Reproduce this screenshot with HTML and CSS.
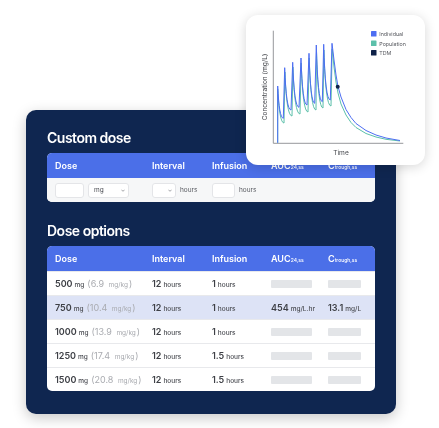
FILE: index.html
```html
<!DOCTYPE html>
<html lang="en">
<head>
<meta charset="utf-8">
<title>Dose options</title>
<link rel="stylesheet" href="styles.css">
</head>
<body>
<div class="stage">
  <div class="panel">
    <h2 class="title">Custom dose</h2>
    <div class="table">
      <div class="row head">
        <div class="cell">Dose</div>
        <div class="cell">Interval</div>
        <div class="cell">Infusion</div>
        <div class="cell">AUC<sub>24,ss</sub></div>
        <div class="cell">C<sub>trough,ss</sub></div>
      </div>
      <div class="row inputs">
        <div class="cell">
          <span class="input w-dose"></span>
          <span class="select w-unit">mg<svg class="chev" viewBox="0 0 5 3"><path d="M0.5 0.5 L2.5 2.5 L4.5 0.5"/></svg></span>
        </div>
        <div class="cell">
          <span class="select w-int"><svg class="chev" viewBox="0 0 5 3"><path d="M0.5 0.5 L2.5 2.5 L4.5 0.5"/></svg></span>
          <span class="unit">hours</span>
        </div>
        <div class="cell">
          <span class="input w-inf"></span>
          <span class="unit">hours</span>
        </div>
        <div class="cell"></div>
        <div class="cell"></div>
      </div>
    </div>

    <h2 class="title second">Dose options</h2>
    <div class="table">
      <div class="row head">
        <div class="cell">Dose</div>
        <div class="cell">Interval</div>
        <div class="cell">Infusion</div>
        <div class="cell">AUC<sub>24,ss</sub></div>
        <div class="cell">C<sub>trough,ss</sub></div>
      </div>
      <div class="row">
        <div class="cell"><b>500</b> <small>mg</small> <span class="muted">(6.9 <small>mg/kg</small>)</span></div>
        <div class="cell"><b>12</b> <small>hours</small></div>
        <div class="cell"><b>1</b> <small>hours</small></div>
        <div class="cell"><span class="ph ph-auc"></span></div>
        <div class="cell"><span class="ph ph-c"></span></div>
      </div>
      <div class="row selected">
        <div class="cell"><b>750</b> <small>mg</small> <span class="muted">(10.4 <small>mg/kg</small>)</span></div>
        <div class="cell"><b>12</b> <small>hours</small></div>
        <div class="cell"><b>1</b> <small>hours</small></div>
        <div class="cell"><b>454</b> <small>mg/L.hr</small></div>
        <div class="cell"><b>13.1</b> <small>mg/L</small></div>
      </div>
      <div class="row">
        <div class="cell"><b>1000</b> <small>mg</small> <span class="muted">(13.9 <small>mg/kg</small>)</span></div>
        <div class="cell"><b>12</b> <small>hours</small></div>
        <div class="cell"><b>1</b> <small>hours</small></div>
        <div class="cell"><span class="ph ph-auc"></span></div>
        <div class="cell"><span class="ph ph-c"></span></div>
      </div>
      <div class="row">
        <div class="cell"><b>1250</b> <small>mg</small> <span class="muted">(17.4 <small>mg/kg</small>)</span></div>
        <div class="cell"><b>12</b> <small>hours</small></div>
        <div class="cell"><b>1.5</b> <small>hours</small></div>
        <div class="cell"><span class="ph ph-auc"></span></div>
        <div class="cell"><span class="ph ph-c"></span></div>
      </div>
      <div class="row">
        <div class="cell"><b>1500</b> <small>mg</small> <span class="muted">(20.8 <small>mg/kg</small>)</span></div>
        <div class="cell"><b>12</b> <small>hours</small></div>
        <div class="cell"><b>1.5</b> <small>hours</small></div>
        <div class="cell"><span class="ph ph-auc"></span></div>
        <div class="cell"><span class="ph ph-c"></span></div>
      </div>
    </div>
  </div>

  <div class="chart-card">
    <svg class="chart" viewBox="0 0 179 150" width="179" height="150">
      <line class="axis" x1="27.3" y1="15.7" x2="27.3" y2="128.3"/>
      <line class="axis" x1="27.3" y1="128.3" x2="157.3" y2="128.3"/>
      <path class="pop" d="M31.7,127.8 L31.7,74 Q33.4,108 38,108 L38.9,57 Q40.5,101 46,101 L46.9,52 Q48.5,99 54,99 L55.2,48 Q56.8,97 62,97 L63.2,43 Q64.8,95 70,95 L70.5,36 Q72,93 77,93 L77.9,35 Q79.5,91 85,91 L86.2,34 L88,52 L90,67 L92,78 L95,89 L100,100 L105,107.5 L110,112.5 L120,118.5 L130,122 L140,124.3 L154,126"/>
      <path class="ind" d="M31.7,127.8 L31.7,71 Q33.2,103 37.3,103.3 L38.7,52.7 Q40.2,95 45,95 L46.7,47.3 Q48.2,92.3 53,92.3 L55,43 Q56.5,90 61,90 L63,38.3 Q64.5,88.3 68.7,88.3 L70.3,30 Q71.8,86.7 76.3,86.7 L77.7,29.3 Q79.2,85 84.3,85 L86,28.3 L88,45 L90,60 L92,71.5 L95,82 L100,94.5 L105,102.5 L110,108.5 L120,115.5 L130,120 L140,123 L154,125.5"/>
      <circle class="tdm" cx="91.7" cy="71.7" r="2"/>
      <rect x="125" y="16" width="5.5" height="5.5" rx="0.6" fill="#4d6ef2"/>
      <rect x="125" y="25.5" width="5.5" height="5.5" rx="0.6" fill="#5cc0aa"/>
      <rect x="125" y="35" width="5.5" height="5.5" rx="0.6" fill="#0e2148"/>
      <text class="legend" x="133.3" y="21">Individual</text>
      <text class="legend" x="133.3" y="30.5">Population</text>
      <text class="legend" x="133.3" y="40">TDM</text>
      <text class="axis-label" x="95" y="140.3" text-anchor="middle">Time</text>
      <text class="axis-label" text-anchor="middle" transform="translate(20.5,72) rotate(-90)">Concentration (mg/L)</text>
    </svg>
  </div>
</div>
</body>
</html>
```

FILE: styles.css
```css
* { box-sizing: border-box; }

html, body {
  margin: 0;
  padding: 0;
  background: #ffffff;
}

body {
  font-family: "Inter", "Liberation Sans", sans-serif;
  color: #3b3d42;
}

.stage {
  position: relative;
  width: 439px;
  height: 428px;
  padding: 110px 0 0 26px;
}

.panel {
  width: 370px;
  height: 304px;
  background: #0f2650;
  border-radius: 10px;
  padding: 18px 21px 0 21px;
  box-shadow: 0 4px 14px rgba(0, 0, 0, 0.22);
  will-change: transform;
}

.title {
  margin: 0 0 5px 0;
  font-size: 14px;
  line-height: 20px;
  font-weight: 600;
  color: #ffffff;
  letter-spacing: -0.5px;
}

.title.second {
  margin-top: 19px;
}

.table {
  width: 328px;
  border-radius: 5px;
  overflow: hidden;
  background: #ffffff;
}

.row {
  display: grid;
  grid-template-columns: 97px 60px 59px 57px 1fr;
  align-items: center;
  height: 24px;
  padding-left: 8px;
  border-top: 1px solid #e8e9ec;
  font-size: 9px;
  white-space: nowrap;
}

.row.head {
  height: 25px;
  border-top: 0;
  background: #4b6fe8;
  color: #ffffff;
  font-weight: 600;
  font-size: 9px;
}

.row.head sub {
  font-size: 5px;
  font-weight: 500;
  vertical-align: -2px;
  line-height: 0;
}

.row.inputs {
  border-top: 0;
  background: #f6f7f8;
}

.row.selected {
  background: #dde3f6;
}

.cell {
  display: flex;
  align-items: baseline;
  gap: 0;
}

.inputs .cell {
  align-items: center;
}

.row b {
  font-weight: 600;
  color: #3e4046;
}

.row small {
  font-size: 6.5px;
  font-weight: 500;
  color: #4a4c52;
  margin-left: 2px;
}

.muted {
  color: #a9abb0;
  margin-left: 3px;
  font-weight: 400;
}

.muted small {
  color: #a9abb0;
  font-weight: 400;
  margin-right: 1px;
}

.input,
.select {
  display: flex;
  align-items: center;
  height: 15px;
  background: #ffffff;
  border: 1px solid #e4e5e8;
  border-radius: 3px;
}

.w-dose { width: 29px; }
.w-inf { width: 23px; }

.select {
  justify-content: space-between;
  padding: 0 3px 0 5px;
  font-size: 6.5px;
  color: #4a4c52;
}

.w-unit { width: 41px; margin-left: 4px; }
.w-int { width: 24px; justify-content: flex-end; }

.chev {
  width: 4px;
  height: 3px;
  fill: none;
  stroke: #6f7278;
  stroke-width: 0.8;
}

.unit {
  font-size: 6.5px;
  color: #55575d;
  margin-left: 4px;
}

.ph {
  display: block;
  height: 8px;
  background: #e3e5e8;
  border-radius: 1px;
  align-self: center;
}

.ph-auc { width: 41px; }
.ph-c { width: 33px; }

.chart-card {
  position: absolute;
  left: 246px;
  top: 15px;
  width: 179px;
  height: 150px;
  background: #ffffff;
  border-radius: 12px;
  box-shadow: 0 2px 12px rgba(0, 0, 0, 0.16);
  will-change: transform;
}

.chart {
  display: block;
}

.axis {
  stroke: #8a8c90;
  stroke-width: 0.9;
}

.ind,
.pop {
  fill: none;
  stroke-width: 1;
  stroke-linejoin: round;
}

.ind { stroke: #4d6ef2; }
.pop { stroke: #5cc0aa; }

.tdm { fill: #0e2148; }

.legend {
  font-family: "Inter", "Liberation Sans", sans-serif;
  font-size: 5.3px;
  fill: #55575d;
}

.axis-label {
  font-family: "Inter", "Liberation Sans", sans-serif;
  font-size: 6.6px;
  fill: #45474c;
}
```
